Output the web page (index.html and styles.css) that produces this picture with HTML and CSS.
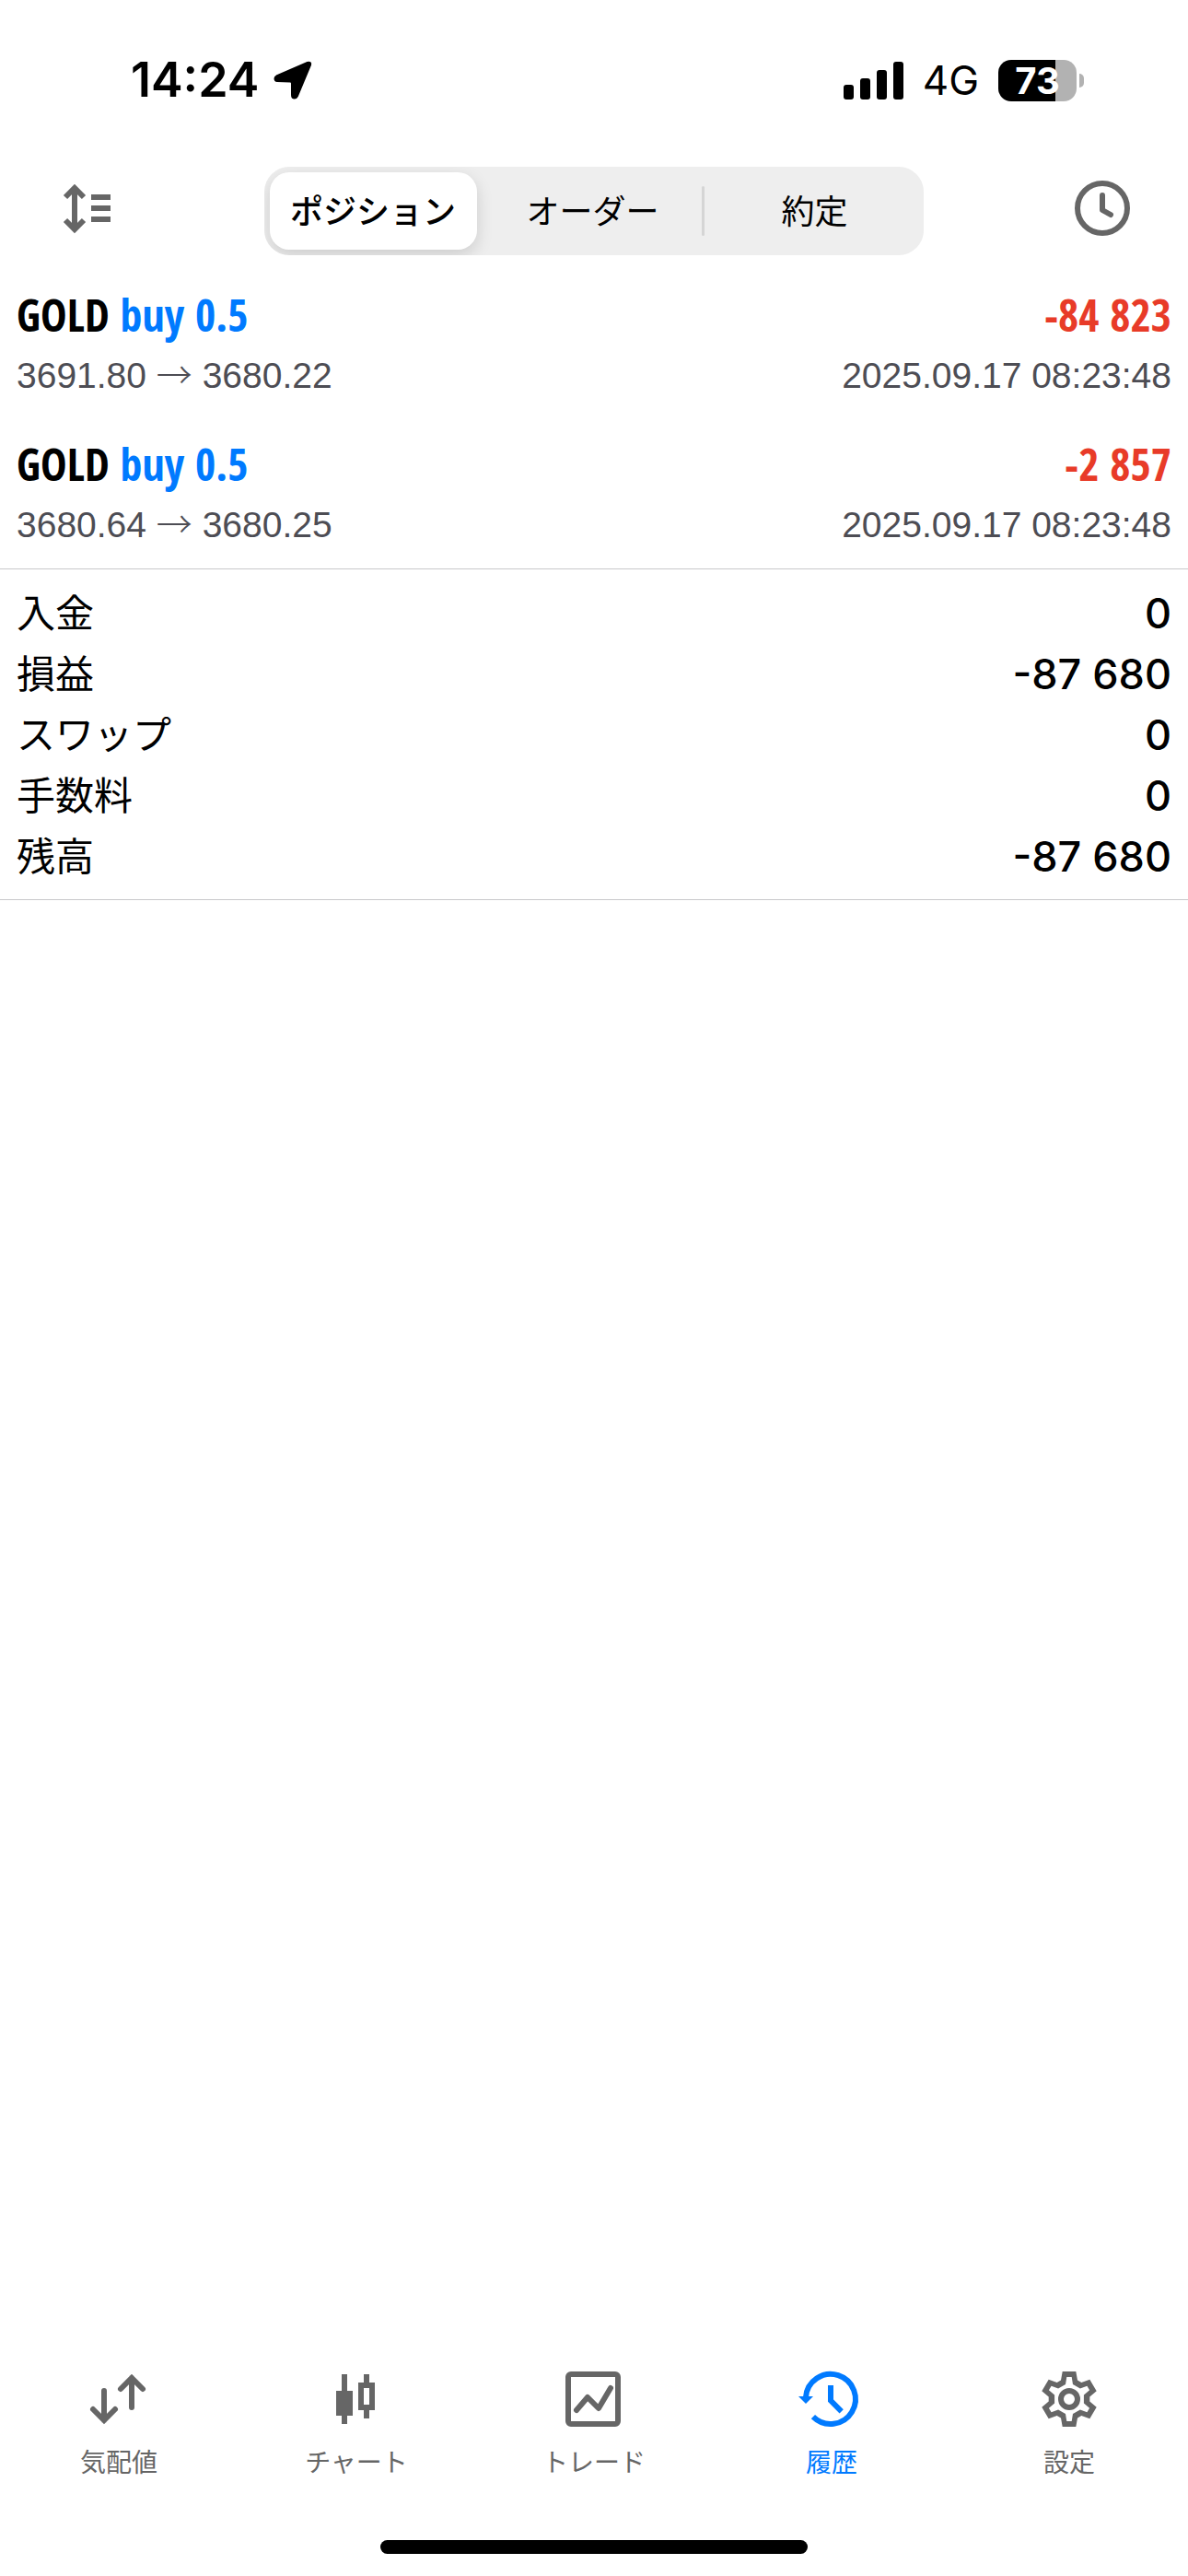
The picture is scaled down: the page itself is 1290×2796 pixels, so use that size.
FILE: index.html
```html
<!DOCTYPE html>
<html lang="ja">
<head>
<meta charset="utf-8">
<meta name="viewport" content="width=device-width">
<title>履歴</title>
<link rel="stylesheet" href="styles.css">
</head>
<body>
<div class="status">
  <div class="status-group">
    <span class="time">14:24</span>
    <svg class="location" viewBox="0 0 42 42" aria-hidden="true"><path d="M39.500 4.500L25.500 38Q24.500 40 22.700 40Q20.500 40 20.500 37V24.500Q20.500 22 18 22L4 21.500Q2 21.500 2 19.300Q2 17.800 3.500 17L37 2.500Q40.500 1.500 39.500 4.500Z" fill="#000" stroke="#000" stroke-width="3" stroke-linejoin="round"/></svg>
  </div>
  <div class="status-group">
    <svg class="signal" viewBox="0 0 65 41" aria-hidden="true"><rect x="0" y="25" width="11" height="16" rx="3"/><rect x="18" y="18" width="11" height="23" rx="3"/><rect x="36" y="9" width="11" height="32" rx="3"/><rect x="54" y="0" width="11" height="41" rx="3"/></svg>
    <span class="network">4G</span>
    <div class="battery"><span class="battery-body">73</span><span class="battery-nub"></span></div>
  </div>
</div>

<header class="toolbar">
  <button class="tool" type="button" aria-label="並べ替え">
    <svg class="icon" viewBox="0 0 72 72"><path d="M21 15V57M11 24L21 14L31 24M11 49L21 59L31 49" fill="none" stroke="currentColor" stroke-width="6"/><path d="M39 21H60V27H39ZM39 33H60V39H39ZM39 45H60V51H39Z" fill="currentColor"/></svg>
  </button>
  <div class="segments" role="tablist">
    <button class="segment selected" type="button" role="tab" aria-selected="true">ポジション</button>
    <button class="segment" type="button" role="tab" aria-selected="false">オーダー</button>
    <span class="divider"></span>
    <button class="segment" type="button" role="tab" aria-selected="false">約定</button>
  </div>
  <button class="tool tool-end" type="button" aria-label="期間">
    <svg class="icon" viewBox="0 0 72 72"><g fill="none" stroke="currentColor" stroke-width="6" stroke-linecap="round" stroke-linejoin="round"><circle cx="36" cy="36" r="27"/><path d="M36 22V38L45 43"/></g></svg>
  </button>
</header>

<main>
  <ul class="deals">
    <li class="deal">
      <div class="line title"><span>GOLD <span class="buy">buy 0.5</span></span><span class="loss">-84 823</span></div>
      <div class="line detail"><span>3691.80 <span class="arrow">→</span> 3680.22</span><time>2025.09.17 08:23:48</time></div>
    </li>
    <li class="deal">
      <div class="line title"><span>GOLD <span class="buy">buy 0.5</span></span><span class="loss">-2 857</span></div>
      <div class="line detail"><span>3680.64 <span class="arrow">→</span> 3680.25</span><time>2025.09.17 08:23:48</time></div>
    </li>
  </ul>
  <div class="summary">
    <table>
      <tr><th scope="row">入金</th><td>0</td></tr>
      <tr><th scope="row">損益</th><td>-87 680</td></tr>
      <tr><th scope="row">スワップ</th><td>0</td></tr>
      <tr><th scope="row">手数料</th><td>0</td></tr>
      <tr><th scope="row">残高</th><td>-87 680</td></tr>
    </table>
  </div>
</main>

<nav class="tabs">
  <a class="tab" href="#quotes">
    <svg class="icon" viewBox="0 0 72 72"><path d="M20 27V59M8 47L20 59L32 47M50 45V13M38 25L50 13L62 25" fill="none" stroke="currentColor" stroke-width="6" stroke-linecap="round"/></svg>
    気配値
  </a>
  <a class="tab" href="#chart">
    <svg class="icon" viewBox="0 0 72 72"><path fill="currentColor" fill-rule="evenodd" d="M20 9H26V27H32V54H26V63H20V54H14V27H20ZM44 9H50V18H56V48H50V57H44V48H38V18H44ZM44 24V42H50V24Z"/></svg>
    チャート
  </a>
  <a class="tab" href="#trade">
    <svg class="icon" viewBox="0 0 72 72"><g fill="none" stroke="currentColor" stroke-width="6" stroke-linecap="round" stroke-linejoin="round"><rect x="8" y="9" width="54" height="54" rx="3"/><path d="M17 48L29 34L41 46L54 24"/></g></svg>
    トレード
  </a>
  <a class="tab current" href="#history" aria-current="page">
    <svg class="icon" viewBox="0 0 72 72"><path d="M8 34A27 27 0 1 1 15.900 55.100M35 21V37.500L46.700 49.300" fill="none" stroke="currentColor" stroke-width="6"/><path d="M0 33H16L8 41Z" fill="currentColor"/></svg>
    履歴
  </a>
  <a class="tab" href="#settings">
    <svg class="icon" viewBox="-36 -36 72 72"><path fill="currentColor" fill-rule="evenodd" d="M7.300 -30L9 -20.500L13.300 -18.100L22.300 -21.300L29.700 -8.700L22.300 -2.400V2.400L29.700 8.700L22.300 21.300L13.300 18.100L9 20.500L7.300 30H-7.300L-9 20.500L-13.300 18.100L-22.300 21.300L-29.700 8.700L-22.300 2.400V-2.400L-29.700 -8.700L-22.300 -21.300L-13.300 -18.100L-9 -20.500L-7.300 -30ZM2.700 -24L4 -16L11.900 -11.500L19.400 -14.300L22.100 -9.700L15.900 -4.500V4.500L22.100 9.700L19.400 14.300L11.900 11.500L4 16L2.700 24H-2.700L-4 16L-11.900 11.500L-19.400 14.300L-22.100 9.700L-15.900 4.500V-4.500L-22.100 -9.700L-19.400 -14.300L-11.900 -11.500L-4 -16L-2.700 -24Z"/><circle r="9" fill="none" stroke="currentColor" stroke-width="6"/></svg>
    設定
  </a>
</nav>
<div class="home-indicator"></div>
</body>
</html>
```
FILE: styles.css
```css
* {
  box-sizing: border-box;
}

body {
  margin: 0;
  min-height: 100vh;
  display: flex;
  flex-direction: column;
  background: #fff;
  color: #000;
  font-family: Inter, "Noto Sans CJK JP", sans-serif;
}

button {
  border: 0;
  padding: 0;
  background: none;
  color: inherit;
  font: inherit;
}

.icon {
  display: block;
  width: 72px;
  height: 72px;
}

/* Status bar */
.status {
  display: flex;
  justify-content: space-between;
  align-items: center;
  height: 176px;
  padding: 0 113px 2px 142px;
}

.status-group {
  display: flex;
  align-items: center;
}

.time {
  font-size: 52px;
  font-weight: 600;
  line-height: 60px;
}

.location {
  width: 42px;
  height: 42px;
  margin-left: 16px;
}

.signal {
  width: 65px;
  height: 41px;
}

.network {
  margin-left: 21px;
  font-size: 44px;
  line-height: 60px;
}

.battery {
  display: flex;
  align-items: center;
  gap: 3px;
  margin-left: 21px;
}

.battery-body {
  width: 85px;
  height: 45px;
  border-radius: 14px;
  background: linear-gradient(to right, #000 73%, #b2b2b2 73%);
  color: #fff;
  font-size: 40px;
  font-weight: 700;
  line-height: 45px;
  text-align: center;
}

.battery-nub {
  width: 5px;
  height: 15px;
  border-radius: 0 5px 5px 0;
  background: #b2b2b2;
}

/* Toolbar */
.toolbar {
  display: grid;
  grid-template-columns: 2fr 5fr 2fr;
  padding: 5px 0 16px;
}

.tool {
  justify-self: start;
  align-self: start;
  padding: 9px 60px;
  color: #666;
}

.tool-end {
  justify-self: end;
  padding: 9px 57px;
}

.segments {
  display: grid;
  grid-template-columns: 1fr 1fr auto 1fr;
  align-items: center;
  height: 96px;
  border-radius: 27px;
  background: #eee;
  overflow: hidden;
}

.segment {
  height: 84px;
  padding-bottom: 4px;
  font-size: 36px;
  white-space: nowrap;
}

.segment.selected {
  margin: 0 7px 0 6px;
  border-radius: 21px;
  background: #fff;
  box-shadow: 0 6px 18px rgba(0, 0, 0, 0.14);
  font-weight: 500;
}

.divider {
  width: 3px;
  height: 54px;
  border-radius: 2px;
  background: #d5d5d5;
}

/* Closed positions */
main {
  flex: 1;
}

.deals {
  margin: 0;
  padding: 0;
  list-style: none;
}

.deal {
  display: grid;
  gap: 6px;
  padding: 19px 18px 17px;
}

.line {
  display: flex;
  justify-content: space-between;
  line-height: 60px;
}

.title {
  font-family: "Open Sans Condensed", "Open Sans", sans-serif;
  font-size: 48px;
  font-weight: 700;
}

.buy {
  color: #007aff;
}

.loss {
  color: #e83b28;
}

.detail {
  color: #4d4d54;
  font-family: "Liberation Sans", sans-serif;
  font-size: 39px;
}

.arrow {
  font-family: "Noto Sans CJK JP", sans-serif;
  font-weight: 300;
  line-height: 1;
}

/* Totals */
.summary {
  padding: 15px 18px 13px;
  border-top: 1px solid #c8c8ca;
  border-bottom: 1px solid #c8c8ca;
}

table {
  width: 100%;
  border-collapse: collapse;
}

th,
td {
  height: 66px;
  padding: 0;
  line-height: 60px;
}

th {
  font-size: 42px;
  font-weight: 400;
  text-align: left;
}

td {
  font-size: 45px;
  font-weight: 500;
  text-align: right;
}

/* Bottom navigation */
.tabs {
  display: grid;
  grid-template-columns: repeat(5, 1fr);
}

.tab {
  display: flex;
  flex-direction: column;
  align-items: center;
  gap: 12px;
  color: #666;
  font-size: 28px;
  line-height: 42px;
  text-decoration: none;
}

.tab.current {
  color: #007aff;
}

.home-indicator {
  align-self: center;
  width: 36%;
  height: 15px;
  margin: 63px 0 24px;
  border-radius: 8px;
  background: #000;
}
```
